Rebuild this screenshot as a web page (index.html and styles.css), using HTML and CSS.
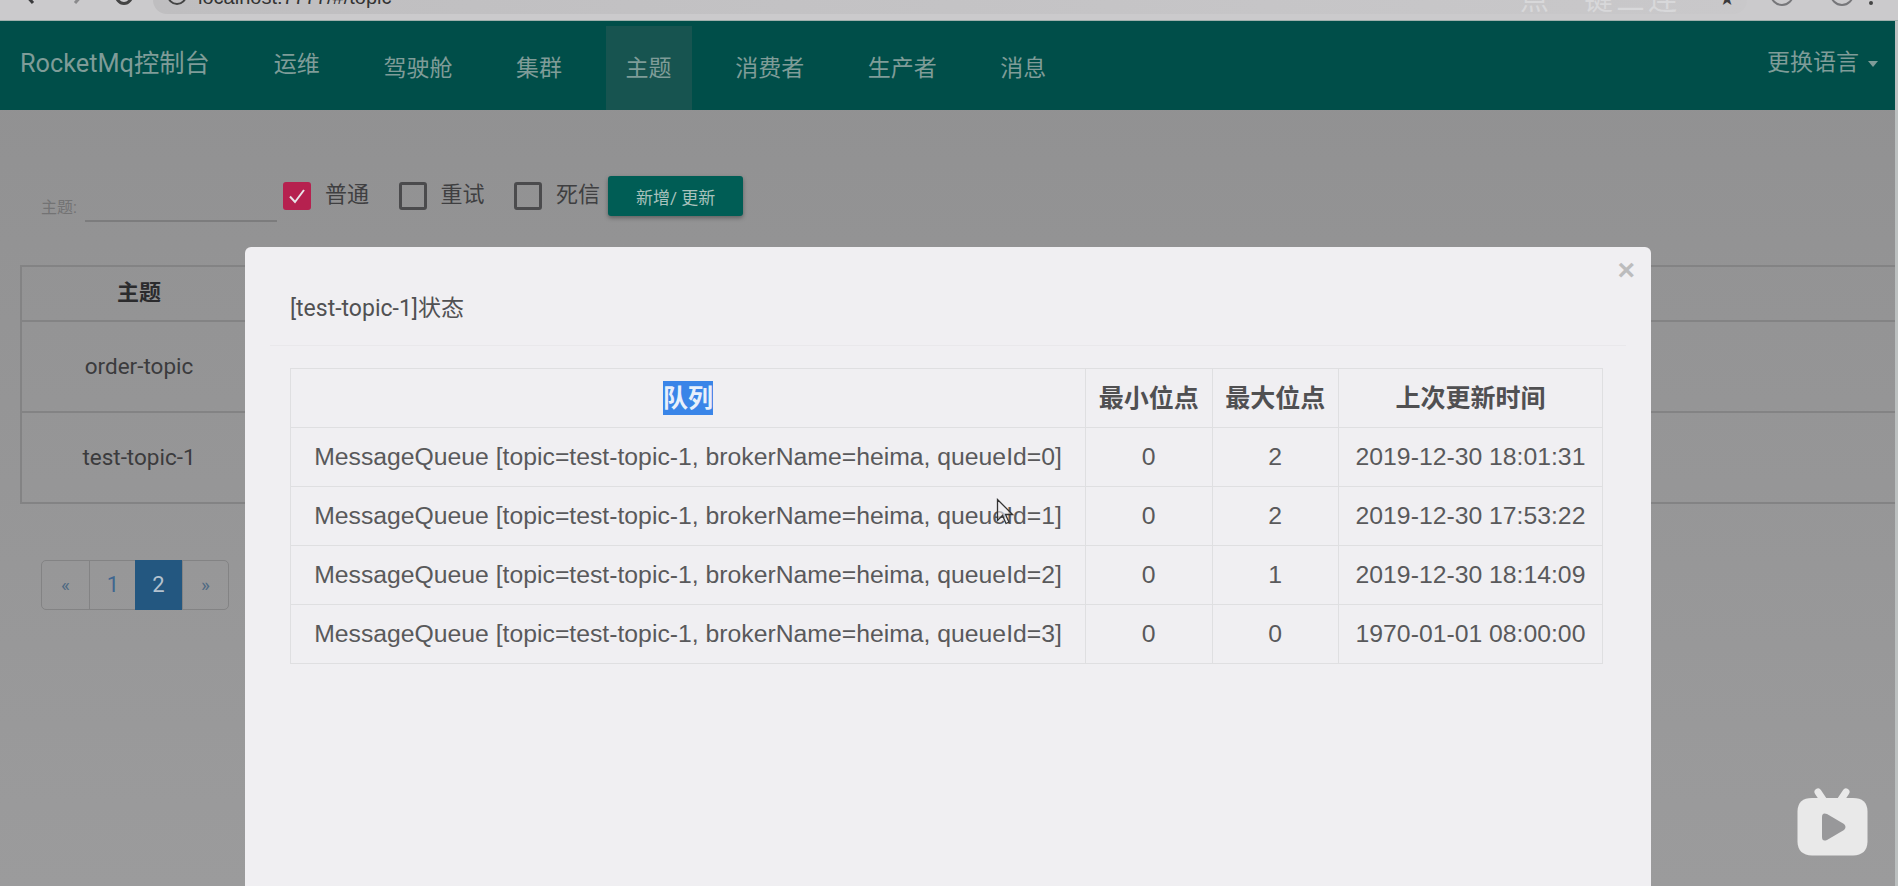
FILE: index.html
```html
<!DOCTYPE html>
<html lang="en">
<head>
    <meta charset="UTF-8">
    <meta name="viewport" content="width=device-width, initial-scale=1.0">
    <title>RocketMq控制台</title>
    <link rel="stylesheet" href="styles.css">
</head>
<body>
    <div class="browser-bar">
        <div class="browser-nav">
            <svg viewBox="0 0 14 24" width="14" height="24"><path d="M11 2L2 12l9 10" fill="none" stroke="#3a3a3c" stroke-width="3"/></svg>
            <svg viewBox="0 0 14 24" width="14" height="24"><path d="M3 2l9 10-9 10" fill="none" stroke="#8a8a8c" stroke-width="3"/></svg>
            <span class="browser-reload"></span>
        </div>
        <div class="address">
            <span class="site-icon"></span>
            <span class="url">localhost:7777/#/topic</span>
            <span class="watermark">点一键三连</span>
            <span class="star">★</span>
        </div>
        <div class="browser-tools">
            <span class="ext"></span>
            <span class="ext"></span>
            <span class="menu-dot"></span>
        </div>
    </div>

    <nav class="navbar">
        <a class="brand">RocketMq控制台</a>
        <a class="nav-item raised">运维</a>
        <a class="nav-item">驾驶舱</a>
        <a class="nav-item">集群</a>
        <a class="nav-item active">主题</a>
        <a class="nav-item">消费者</a>
        <a class="nav-item">生产者</a>
        <a class="nav-item">消息</a>
        <a class="lang">更换语言<span class="caret"></span></a>
    </nav>

    <main class="content">
        <div class="filter">
            <label class="topic-label">主题:</label>
            <span class="topic-input"></span>
            <label class="check"><span class="box checked">
                <svg viewBox="0 0 28 28" width="28" height="28"><path d="M7 14.5l5 5.500 9-12" fill="none" stroke="#e8e4e8" stroke-width="2"/></svg>
            </span>普通</label>
            <label class="check"><span class="box"></span>重试</label>
            <label class="check last"><span class="box"></span>死信</label>
            <button class="add-btn">新增/ 更新</button>
        </div>

        <table class="topic-table">
            <tr class="head-row"><th>主题</th><th></th></tr>
            <tr class="body-row"><td>order-topic</td><td></td></tr>
            <tr class="body-row"><td>test-topic-1</td><td></td></tr>
        </table>

        <ul class="pager">
            <li class="arrow">«</li>
            <li>1</li>
            <li class="current">2</li>
            <li class="arrow">»</li>
        </ul>
    </main>

    <div class="edge"></div>

    <div class="modal">
        <span class="close">×</span>
        <div class="modal-head">[test-topic-1]状态</div>
        <table class="status-table">
            <tr>
                <th class="col-queue"><span class="selected">队列</span></th>
                <th class="col-num">最小位点</th>
                <th class="col-num">最大位点</th>
                <th class="col-time">上次更新时间</th>
            </tr>
            <tr>
                <td>MessageQueue [topic=test-topic-1, brokerName=heima, queueId=0]</td>
                <td>0</td><td>2</td><td>2019-12-30 18:01:31</td>
            </tr>
            <tr>
                <td>MessageQueue [topic=test-topic-1, brokerName=heima, queueId=1]</td>
                <td>0</td><td>2</td><td>2019-12-30 17:53:22</td>
            </tr>
            <tr>
                <td>MessageQueue [topic=test-topic-1, brokerName=heima, queueId=2]</td>
                <td>0</td><td>1</td><td>2019-12-30 18:14:09</td>
            </tr>
            <tr>
                <td>MessageQueue [topic=test-topic-1, brokerName=heima, queueId=3]</td>
                <td>0</td><td>0</td><td>1970-01-01 08:00:00</td>
            </tr>
        </table>
    </div>

    <svg class="cursor" viewBox="0 0 18 28" width="18" height="28">
        <path d="M1.5 1.5v21l5-5 3.500 8 3-1.300-3.500-7.700h7z" fill="#f0eff2" fill-opacity="0.6" stroke="#333" stroke-width="1.300"/>
    </svg>

    <svg class="bili" viewBox="0 0 72 70" width="72" height="70">
        <path d="M21 4l6 9M49 4l-6 9" stroke="#e9e9e9" stroke-width="7" stroke-linecap="round"/>
        <path d="M15 10h41q14 0 14.500 13v31q-.5 13-14.500 13.500H15Q1 67 .5 54V23Q1 10 15 10z" fill="#e9e9e9"/>
        <path d="M25 29q0-5 5-3l17 10q3 3 0 6l-17 10q-5 2-5-3z" fill="#98989a"/>
    </svg>
</body>
</html>
```

FILE: styles.css
```css
* {
    box-sizing: border-box;
}

html, body {
    margin: 0;
    height: 886px;
    overflow: hidden;
}

body {
    position: relative;
    font-family: Roboto, "Noto Sans CJK SC", sans-serif;
    background: linear-gradient(#909091, #9b9b9c);
    color: #3c3c3e;
}

/* browser chrome, cut off at the top */
.browser-bar {
    height: 21px;
    background: #cbcacc;
    border-bottom: 1px solid #9fb0ac;
    display: flex;
    align-items: flex-start;
    overflow: hidden;
}

.browser-nav {
    width: 153px;
    display: flex;
    align-items: flex-start;
    padding-left: 22px;
    margin-top: -19px;
}

.browser-nav svg {
    margin-right: 36px;
    flex: none;
}

.browser-nav svg + svg {
    margin-right: 28px;
}

.browser-reload {
    width: 20px;
    height: 24px;
    border: 3px solid #444;
    border-radius: 50%;
    flex: none;
}

.address {
    width: 1594px;
    height: 14px;
    background: linear-gradient(90deg, #bfbec0, #c9c8ca);
    border-radius: 0 0 14px 14px;
    position: relative;
    overflow: hidden;
    flex: none;
}

.site-icon {
    position: absolute;
    left: 14px;
    top: -15px;
    width: 20px;
    height: 20px;
    border: 2px solid #444;
    border-radius: 50%;
}

.url {
    position: absolute;
    left: 45px;
    top: -14px;
    font-family: "Liberation Sans", sans-serif;
    font-size: 20px;
    line-height: 22px;
    color: #333;
    white-space: nowrap;
}

.watermark {
    position: absolute;
    left: 1367px;
    top: -13px;
    font-size: 29px;
    line-height: 26px;
    letter-spacing: 3px;
    color: #d8d8da;
    white-space: nowrap;
}

.star {
    position: absolute;
    left: 1566px;
    top: -11px;
    font-family: "DejaVu Sans", sans-serif;
    font-size: 18px;
    line-height: 20px;
    color: #3a3a3c;
}

.browser-tools {
    flex: 1;
    display: flex;
    align-items: flex-start;
    gap: 36px;
    padding-left: 23px;
}

.ext {
    width: 24px;
    height: 24px;
    margin-top: -18px;
    border: 2px solid #77777a;
    border-radius: 50%;
}

.menu-dot {
    width: 4px;
    height: 4px;
    margin: 1px 0 0 -21px;
    border-radius: 50%;
    background: #444;
}

/* top navigation */
.navbar {
    height: 89px;
    background: #004e49;
    color: #7f9c98;
    display: flex;
    position: relative;
    padding-left: 20px;
}

.brand {
    font-size: 25.300px;
    line-height: 28px;
    margin-top: 29px;
    width: 222px;
    white-space: nowrap;
}

.nav-item {
    font-size: 23px;
    line-height: 28px;
    padding: 34px 20px 0;
    margin: 0 11.800px;
    text-align: center;
    white-space: nowrap;
}

.nav-item.raised {
    padding-top: 30px;
}

.active {
    background: #175450;
    margin-top: 5px;
    padding-top: 29px;
}

.lang {
    position: absolute;
    right: 20px;
    top: 28px;
    font-size: 23px;
    line-height: 28px;
}

.caret {
    display: inline-block;
    margin-left: 9px;
    vertical-align: 3px;
    border-top: 6px solid #7f9c98;
    border-left: 5px solid transparent;
    border-right: 5px solid transparent;
}

/* page under the overlay */
.content {
    padding: 65px 0 0 20px;
}

.filter {
    display: flex;
    align-items: flex-start;
    height: 90px;
    margin-left: 21px;
}

.topic-label {
    font-size: 16px;
    line-height: 20px;
    color: #737374;
    margin-top: 23px;
    width: 44px;
}

.topic-input {
    width: 192px;
    height: 47px;
    border-bottom: 2px solid #7c7c7d;
    margin-right: 6px;
}

.check {
    display: flex;
    align-items: center;
    gap: 14px;
    font-size: 22px;
    color: #3f3f41;
    height: 42px;
    margin-top: -4px;
    margin-right: 29.500px;
}

.check.last {
    margin-right: 8px;
}

.box {
    width: 28px;
    height: 28px;
    margin-top: 8px;
    border: 3px solid #4b4b4d;
    border-radius: 3px;
    display: block;
}

.box.checked {
    border: none;
    background: #b6214f;
}

.box svg {
    display: block;
}

.add-btn {
    height: 40px;
    width: 135px;
    margin-top: 1px;
    border: none;
    border-radius: 3px;
    background: #005d55;
    color: #a9c2bd;
    font-family: inherit;
    font-size: 17px;
    box-shadow: 0 2px 4px rgba(0, 0, 0, 0.35);
}

.topic-table {
    width: 100%;
    border-collapse: collapse;
    border-left: 2px solid #838384;
}

.topic-table th, .topic-table td {
    border-top: 2px solid #838384;
    border-bottom: 2px solid #838384;
    text-align: center;
    padding: 0;
}

.head-row {
    height: 55px;
    font-size: 22px;
}

.head-row th {
    color: #2b2b2d;
    padding-bottom: 8px;
}

.head-row th:first-child {
    width: 235px;
}

.body-row {
    height: 91px;
    font-size: 22.500px;
    color: #3b3b3d;
}

.body-row td {
    padding-bottom: 2px;
}

.pager {
    list-style: none;
    display: inline-flex;
    margin: 56px 0 0 21px;
    padding: 0;
    border: 1px solid #838384;
    border-radius: 5px;
    height: 50px;
    color: #3f6690;
}

.pager li {
    width: 47px;
    line-height: 48px;
    text-align: center;
    font-size: 22px;
    border-left: 1px solid #838384;
}

.pager li:first-child {
    border-left: none;
}

.pager li:last-child {
    width: 46px;
}

.pager .arrow {
    font-size: 19px;
    color: #4f6a83;
}

.pager .current {
    width: 47px;
    height: 50px;
    margin-top: -1px;
    margin-left: -1px;
    line-height: 50px;
    background: #235780;
    color: #b4c2cf;
    border-left: none;
}

.edge {
    position: absolute;
    right: 0;
    top: 21px;
    bottom: 0;
    width: 3px;
    background: #bcc0c0;
}

/* modal */
.modal {
    position: absolute;
    left: 245px;
    top: 247px;
    width: 1406px;
    height: 650px;
    background: #f0eff2;
    border-radius: 6px 6px 0 0;
    padding: 0 45px;
}

.close {
    position: absolute;
    right: 16px;
    top: 4px;
    font-family: "Liberation Sans", sans-serif;
    font-size: 30px;
    line-height: 38px;
    font-weight: bold;
    color: #bcbcbd;
}

.modal-head {
    height: 99px;
    margin: 0 -20px;
    padding: 49px 20px 0;
    font-size: 23px;
    line-height: 26px;
    color: #515153;
    border-bottom: 1px solid #e9e8eb;
}

.status-table {
    margin-top: 22px;
    width: 1313px;
    border-collapse: collapse;
    table-layout: fixed;
    font-family: "Liberation Sans", "Noto Sans CJK SC", sans-serif;
    color: #59595b;
}

.status-table th, .status-table td {
    height: 59px;
    border: 1px solid #dfdfe1;
    text-align: center;
    padding: 0;
    font-size: 24.750px;
    white-space: nowrap;
}

.status-table th {
    font-size: 25px;
    color: #505052;
    padding-bottom: 4px;
}

.col-queue {
    width: 795px;
}

.col-num {
    width: 126.500px;
}

.selected {
    background: #3a85e8;
    color: #e9f0fb;
    padding: 3px 0;
}

.cursor {
    position: absolute;
    left: 996px;
    top: 498px;
}

.bili {
    position: absolute;
    left: 1797px;
    top: 788px;
}
```
